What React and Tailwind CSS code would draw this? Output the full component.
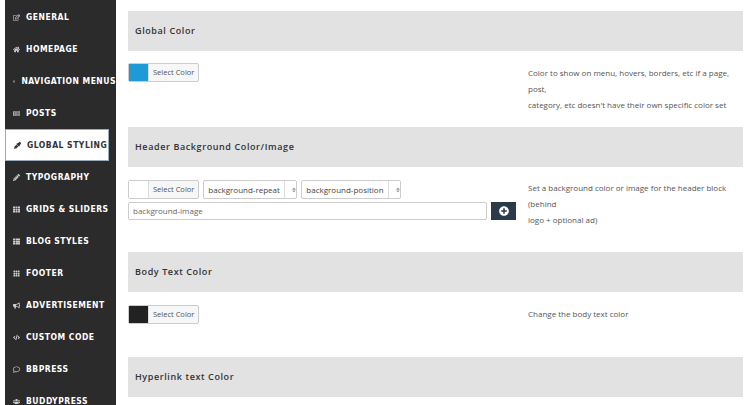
import React from "react";
import { FaRegEdit, FaHome, FaBars, FaRegNewspaper, FaEyeDropper, FaPencilAlt, FaTh, FaThList, FaBullhorn, FaCode, FaRegComment, FaUsers, FaPlusCircle, FaSort } from "react-icons/fa";
import { BsGrid3X3GapFill } from "react-icons/bs";

const items = [
  [FaRegEdit, "GENERAL"], [FaHome, "HOMEPAGE"], [FaBars, "NAVIGATION MENUS"], [FaRegNewspaper, "POSTS"],
  [FaEyeDropper, "GLOBAL STYLING", true], [FaPencilAlt, "TYPOGRAPHY"], [FaTh, "GRIDS & SLIDERS"],
  [FaThList, "BLOG STYLES"], [BsGrid3X3GapFill, "FOOTER"], [FaBullhorn, "ADVERTISEMENT"],
  [FaCode, "CUSTOM CODE"], [FaRegComment, "BBPRESS"], [FaUsers, "BUDDYPRESS"],
];

const Band = ({ t }) => (
  <div className="h-[40px] bg-[#e2e2e2] flex items-center pl-[7px] text-[9px] font-semibold tracking-[0.6px] text-[#333]">{t}</div>
);

const Swatch = ({ c }) => (
  <div className="flex h-[19px] border border-[#ccc] rounded-[2px] w-fit bg-[#f7f7f7]">
    <div className="w-[19px] h-full" style={{ background: c }} />
    <div className="px-[4px] border-l border-[#ddd] text-[7.5px] text-[#555] flex items-center whitespace-nowrap">Select Color</div>
  </div>
);

const Sel = ({ t, w }) => (
  <div className={`h-[19px] border border-[#ccc] rounded-[2px] flex items-center text-[8px] text-[#444] bg-white whitespace-nowrap ${w}`}>
    <span className="px-[4px] flex-1">{t}</span>
    <span className="w-[19px] h-full border-l border-[#ddd] flex items-center justify-center text-[#999] shrink-0"><FaSort size={6} /></span>
  </div>
);

export default function App() {
  return (
    <div className="w-[750px] h-[405px] flex bg-white overflow-hidden" style={{ fontFamily: "'Open Sans', sans-serif" }}>
      <div className="w-[5px] bg-white shrink-0" />
      <div className="w-[111px] shrink-0 bg-[#2b2b2b] pt-[1px]" style={{ fontFamily: "'DejaVu Sans Condensed', sans-serif" }}>
        {items.map(([I, t, a]) => (
          <div key={t} className={`h-[32px] flex items-center gap-[6px] pl-[8px] text-[8.5px] font-bold tracking-[0.5px] whitespace-nowrap ${a ? "bg-white text-[#333] border border-[#9ab] w-[104px]" : "text-white"}`}>
            <I size={7} className={a ? "text-[#333]" : "text-[#ccc]"} />
            <span>{t}</span>
          </div>
        ))}
      </div>
      <div className="flex-1 pl-[12px] pr-[7px] pt-[11px] text-[#444]">
        <Band t="Global Color" />
        <div className="h-[76px] flex pt-[12px]">
          <div className="w-[400px] shrink-0"><Swatch c="#1e9ad6" /></div>
          <div className="text-[8px] leading-[16px] pt-[2px] text-[#555]">Color to show on menu, hovers, borders, etc if a page, post,<br />category, etc doesn't have their own specific color set</div>
        </div>
        <Band t="Header Background Color/Image" />
        <div className="h-[85px] flex pt-[13px]">
          <div className="w-[400px] shrink-0 flex flex-col gap-[3px]">
            <div className="flex gap-[4px]">
              <Swatch c="#fff" />
              <Sel t="background-repeat" w="w-[94px]" />
              <Sel t="background-position" w="w-[100px]" />
            </div>
            <div className="flex gap-[4px]">
              <div className="w-[359px] h-[18px] border border-[#ccc] rounded-[2px] flex items-center px-[4px] text-[8px] text-[#666]">background-image</div>
              <div className="w-[25px] h-[18px] bg-[#2a3a4a] flex items-center justify-center text-white"><FaPlusCircle size={10} /></div>
            </div>
          </div>
          <div className="text-[8px] leading-[16px] text-[#555]">Set a background color or image for the header block (behind<br />logo + optional ad)</div>
        </div>
        <Band t="Body Text Color" />
        <div className="h-[65px] flex pt-[13px]">
          <div className="w-[400px] shrink-0"><Swatch c="#222" /></div>
          <div className="text-[8px] pt-[3px] text-[#555]">Change the body text color</div>
        </div>
        <Band t="Hyperlink text Color" />
      </div>
    </div>
  );
}
